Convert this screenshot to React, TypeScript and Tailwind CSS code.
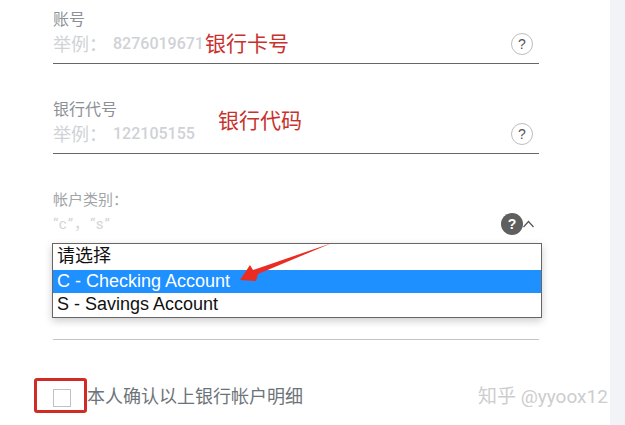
import React from "react";

const cjk = "font-['Roboto','Noto_Sans_CJK_SC',sans-serif]";

function HelpIcon() {
  return (
    <span className="flex h-[22px] w-[22px] items-center justify-center rounded-full border border-[#bdbdbd] bg-white font-['Liberation_Sans',sans-serif] text-[14px] text-[#555]">
      ?
    </span>
  );
}

function Field({ label, hint, value, mt }: { label: string; hint: string; value: string; mt: string }) {
  return (
    <div className={`${mt} flex h-[54px] w-[486px] flex-col border-b border-[#666] ${cjk}`}>
      <div className="h-[20px] text-[16px] leading-[20px] text-[#8c9196]">{label}</div>
      <div className="flex h-[28px] items-center justify-between pr-[6px]">
        <div className="flex items-center text-[#cfd2d6]">
          <span className="w-[60px] text-[18px]">{hint}</span>
          <span className="text-[16px] font-medium">{value}</span>
        </div>
        <HelpIcon />
      </div>
    </div>
  );
}

export default function App() {
  return (
    <div className={`relative flex h-[425px] w-[625px] overflow-hidden bg-white ${cjk}`}>
      <div className="w-[610px] pl-[53px] pt-[10px]">
        <Field label="账号" hint="举例：" value="8276019671" mt="mt-0" />
        <Field label="银行代号" hint="举例：" value="122105155" mt="mt-[36px]" />

        {/* account type */}
        <div className="mt-[36px] w-[486px]">
          <div className="h-[20px] text-[15px] leading-[20px] text-[#a2a5a8]">帐户类别：</div>
          <div className="flex h-[28px] items-center justify-between">
            <span className="text-[15px] tracking-[1px] text-[#d3d5d8]">“c”，“s”</span>
            <div className="flex items-center pr-[5px]">
              <span className="flex h-[22px] w-[22px] items-center justify-center rounded-full bg-[#5f5f5f] font-['Liberation_Sans',sans-serif] text-[14px] font-bold text-white">
                ?
              </span>
              <svg width="11" height="8" viewBox="0 0 11 8" fill="none" stroke="#555" strokeWidth="1.2">
                <path d="M0.5 7 L5.5 1.5 L10.5 7" />
              </svg>
            </div>
          </div>
        </div>

        <div className="-ml-[1px] mt-[5px] w-[490px] border border-[#666] bg-white py-[1px] font-['Liberation_Sans','Noto_Sans_CJK_SC',sans-serif] text-[18px] leading-[23px] text-[#111] shadow-[0_3px_8px_rgba(0,0,0,0.2)]">
          <div className="h-[25px] pl-[4px]">请选择</div>
          <div className="h-[23px] bg-[#1e90ff] pl-[4px] text-white">C - Checking Account</div>
          <div className="h-[23px] pl-[4px]">S - Savings Account</div>
        </div>

        <div className="mt-[21px] w-[486px] border-b border-[#c4c4c4]" />

        <div className="mt-[48px] flex items-center">
          <span className="h-[18px] w-[18px] border border-[#c2c2c2] bg-white" />
          <span className="relative ml-[16px] -top-[1px] text-[18px] leading-[20px] text-[#6d7479]">本人确认以上银行帐户明细</span>
        </div>
      </div>
      <div className="w-[15px] bg-[#f2f3f7]" />

      {/* annotations drawn on top of the screenshot */}
      <span className="absolute left-[205px] top-[29px] text-[21px] leading-[30px] text-[#c8322e]">银行卡号</span>
      <span className="absolute left-[218px] top-[106px] text-[21px] leading-[30px] text-[#c8322e]">银行代码</span>
      <svg className="absolute left-[235px] top-[240px]" width="100" height="46" viewBox="0 0 100 46">
        <path d="M97 3 L18 30 L15 25 L5 40 L21 41 L23 34 Z" fill="#ea2c22" />
      </svg>
      <div className="absolute left-[34px] top-[378px] h-[35px] w-[53px] rounded-[3px] border-[3px] border-[#d12b25]" />
      <span className="absolute left-[478px] top-[385px] whitespace-nowrap text-[19px] leading-[24px] text-[#cdcdcd]">知乎 @yyoox12</span>
    </div>
  );
}
